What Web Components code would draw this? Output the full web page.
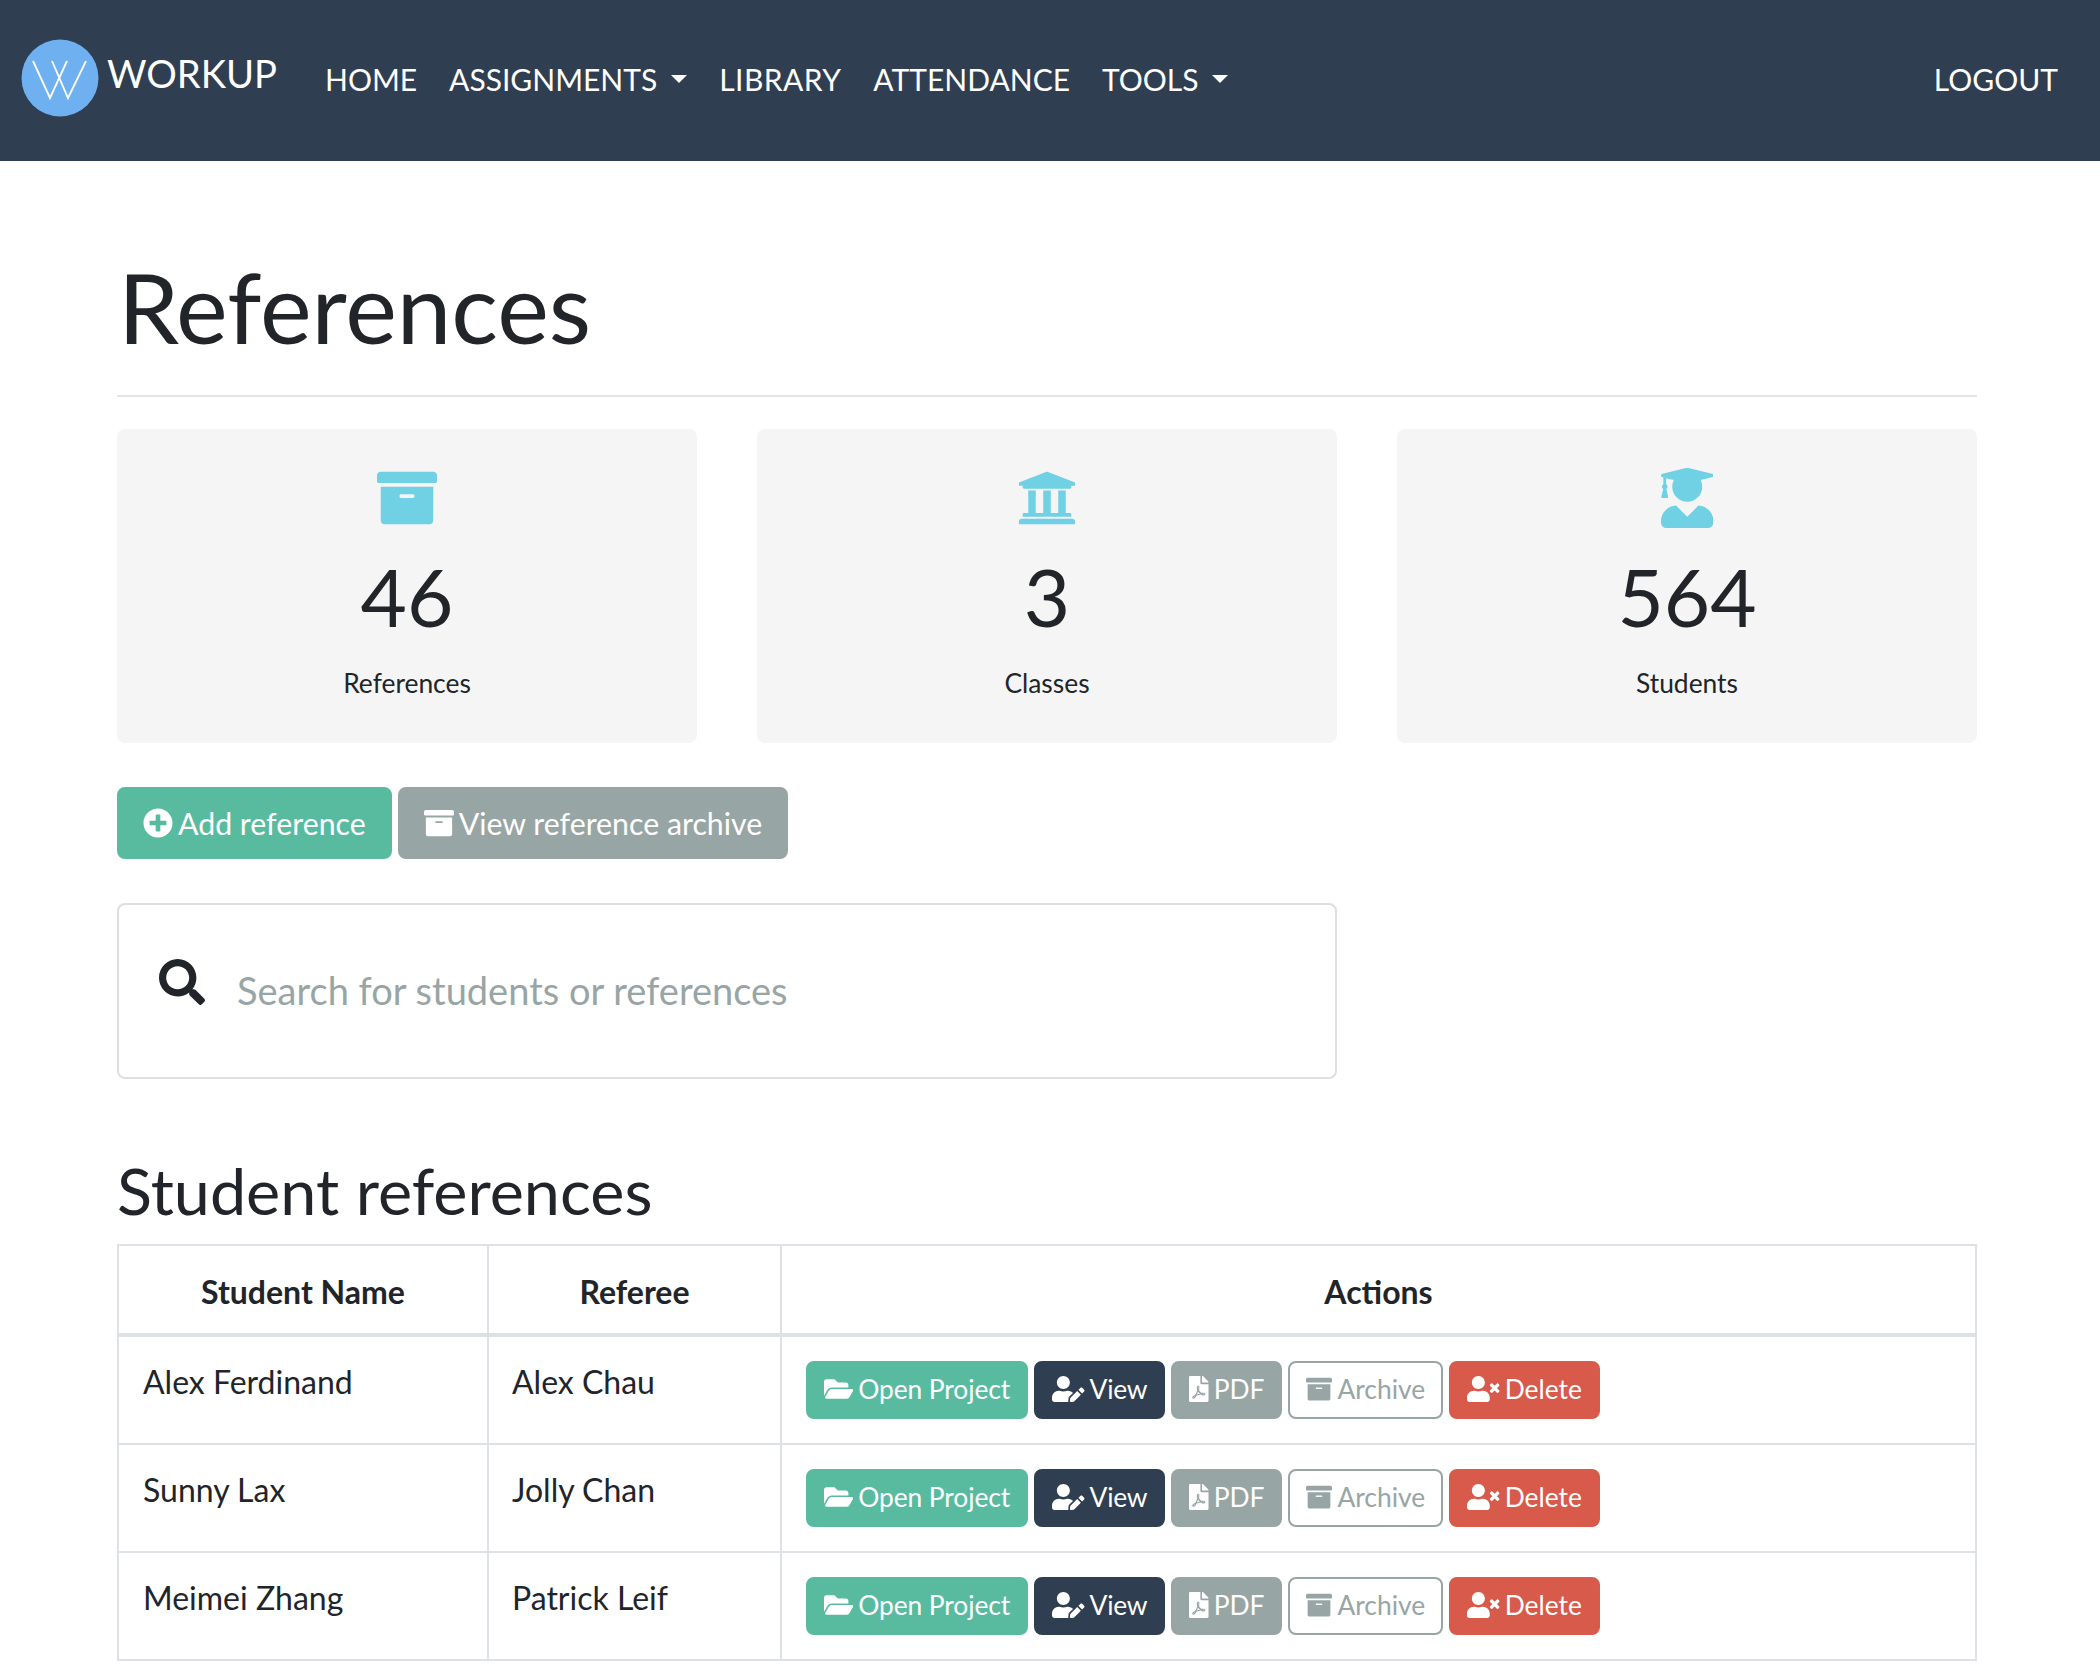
<!DOCTYPE html>
<html lang="en">
<head>
<meta charset="utf-8">
<title>References</title>
<style>
  html, body { margin: 0; background: #fff; }
  body { font-family: Lato, "Liberation Sans", sans-serif; color: #212529; }
</style>
</head>
<body>
<app-nav>
  <nav-link href="#">HOME</nav-link>
  <nav-link href="#" caret>ASSIGNMENTS</nav-link>
  <nav-link href="#" style="letter-spacing:.45px">LIBRARY</nav-link>
  <nav-link href="#">ATTENDANCE</nav-link>
  <nav-link href="#" caret>TOOLS</nav-link>
  <nav-link href="#" slot="right">LOGOUT</nav-link>
</app-nav>
<page-main>
  <page-title>References</page-title>
  <stat-row>
    <stat-card icon="archive" value="46">References</stat-card>
    <stat-card icon="university" value="3">Classes</stat-card>
    <stat-card icon="graduate" value="564">Students</stat-card>
  </stat-row>
  <button-row>
    <action-btn big variant="teal" icon="plus">Add reference</action-btn>
    <action-btn big variant="gray" icon="archive">View reference archive</action-btn>
  </button-row>
  <search-box placeholder="Search for students or references"></search-box>
  <section-title>Student references</section-title>
  <ref-table>
    <ref-row student="Alex Ferdinand" referee="Alex Chau"></ref-row>
    <ref-row student="Sunny Lax" referee="Jolly Chan"></ref-row>
    <ref-row student="Meimei Zhang" referee="Patrick Leif"></ref-row>
  </ref-table>
</page-main>

<script>
const ICONS = {
  archive: [512, 'M32 448c0 17.7 14.3 32 32 32h384c17.7 0 32-14.3 32-32V160H32v288zm160-212c0-6.6 5.4-12 12-12h104c6.6 0 12 5.4 12 12v8c0 6.6-5.4 12-12 12H204c-6.6 0-12-5.4-12-12v-8zM480 32H32C14.3 32 0 46.3 0 64v48c0 8.8 7.2 16 16 16h480c8.8 0 16-7.2 16-16V64c0-17.7-14.3-32-32-32z'],
  university: [512, 'M496 128v16a8 8 0 0 1-8 8h-24v12c0 6.627-5.373 12-12 12H60c-6.627 0-12-5.373-12-12v-12H24a8 8 0 0 1-8-8v-16a8 8 0 0 1 4.941-7.392l232-88a7.996 7.996 0 0 1 6.118 0l232 88A8 8 0 0 1 496 128zm-24 304H40c-13.255 0-24 10.745-24 24v16a8 8 0 0 0 8 8h464a8 8 0 0 0 8-8v-16c0-13.255-10.745-24-24-24zM96 192v192H60c-6.627 0-12 5.373-12 12v20h416v-20c0-6.627-5.373-12-12-12h-36V192h-64v192h-64V192h-64v192h-64V192H96z'],
  graduate: [448, 'M319.4 320.6L224 416l-95.4-95.4C57.1 323.7 0 382.2 0 454.4v9.6c0 26.5 21.5 48 48 48h352c26.5 0 48-21.5 48-48v-9.6c0-72.2-57.1-130.7-128.6-133.8zM13.6 79.8l6.4 1.5v58.4c-7 4.2-12 11.5-12 20.3 0 8.4 4.6 15.4 11.1 19.7L3.5 242c-1.7 6.9 2.1 14 7.6 14h41.8c5.5 0 9.3-7.1 7.6-14l-15.6-62.3C51.4 175.4 56 168.4 56 160c0-8.8-5-16.1-12-20.3V87.1l66 15.9c-8.6 17.2-14 36.4-14 57 0 70.7 57.3 128 128 128s128-57.3 128-128c0-20.6-5.3-39.8-14-57l96.3-23.2c18.2-4.4 18.2-27.1 0-31.5l-190.4-46c-13-3.1-26.7-3.1-39.7 0L13.6 48.2c-18.1 4.4-18.1 27.2 0 31.6z'],
  plus: [512, 'M256 8C119 8 8 119 8 256s111 248 248 248 248-111 248-248S393 8 256 8zm144 276c0 6.6-5.4 12-12 12h-92v92c0 6.6-5.4 12-12 12h-56c-6.6 0-12-5.4-12-12v-92h-92c-6.6 0-12-5.4-12-12v-56c0-6.6 5.4-12 12-12h92v-92c0-6.6 5.4-12 12-12h56c6.6 0 12 5.4 12 12v92h92c6.6 0 12 5.4 12 12v56z'],
  search: [512, 'M505 442.7L405.3 343c-4.5-4.5-10.6-7-17-7H372c27.6-35.3 44-79.7 44-128C416 93.1 322.9 0 208 0S0 93.1 0 208s93.1 208 208 208c48.3 0 92.7-16.4 128-44v16.3c0 6.4 2.5 12.5 7 17l99.7 99.7c9.4 9.4 24.6 9.4 33.9 0l28.3-28.3c9.4-9.4 9.4-24.6.1-34zM208 336c-70.7 0-128-57.2-128-128 0-70.7 57.2-128 128-128 70.7 0 128 57.2 128 128 0 70.7-57.2 128-128 128z'],
  folder: [576, 'M572.694 292.093L500.27 416.248A63.997 63.997 0 0 1 444.989 448H45.025c-18.523 0-30.064-20.093-20.731-36.093l72.424-124.155A64 64 0 0 1 152 256h399.964c18.523 0 30.064 20.093 20.73 36.093zM152 224h328v-48c0-26.51-21.49-48-48-48H272l-64-64H48C21.49 64 0 85.49 0 112v278.046l69.077-118.418C86.214 242.25 117.989 224 152 224z'],
  useredit: [640, 'M224 256c70.7 0 128-57.3 128-128S294.7 0 224 0 96 57.3 96 128s57.3 128 128 128zm89.6 32h-16.7c-22.2 10.2-46.9 16-72.9 16s-50.6-5.8-72.9-16h-16.7C60.2 288 0 348.2 0 422.4V464c0 26.5 21.5 48 48 48h274.9c-2.4-6.8-3.4-14-2.6-21.3l6.8-60.9 1.2-11.1 7.9-7.9 77.3-77.3c-24.5-27.7-60-45.5-99.9-45.5zm45.3 145.3l-6.8 61c-1.1 10.2 7.5 18.8 17.6 17.6l60.9-6.8 137.9-137.9-71.7-71.7-137.9 137.8zM633 268.9L595.1 231c-9.3-9.3-24.5-9.3-33.8 0l-37.8 37.8-4.1 4.1 71.8 71.7 41.8-41.8c9.3-9.4 9.3-24.5 0-33.9z'],
  usertimes: [640, 'M589.6 240l45.6-45.6c6.3-6.3 6.3-16.5 0-22.8l-22.8-22.8c-6.3-6.3-16.5-6.3-22.8 0L544 194.4l-45.6-45.6c-6.3-6.3-16.5-6.3-22.8 0l-22.8 22.8c-6.3 6.3-6.3 16.5 0 22.8l45.6 45.6-45.6 45.6c-6.3 6.3-6.3 16.5 0 22.8l22.8 22.8c6.3 6.3 16.5 6.3 22.8 0l45.6-45.6 45.6 45.6c6.3 6.3 16.5 6.3 22.8 0l22.8-22.8c6.3-6.3 6.3-16.5 0-22.8L589.6 240zM224 256c70.7 0 128-57.3 128-128S294.7 0 224 0 96 57.3 96 128s57.3 128 128 128zm89.6 32h-16.7c-22.2 10.2-46.9 16-72.9 16s-50.6-5.8-72.9-16h-16.7C60.2 288 0 348.2 0 422.4V464c0 26.5 21.5 48 48 48h352c26.5 0 48-21.5 48-48v-41.6c0-74.2-60.2-134.4-134.4-134.4z'],
  pdf: [384, 'M181.9 256.1c-5-16-4.9-46.9-2-46.9 8.4 0 7.6 36.9 2 46.9zm-1.7 47.2c-7.7 20.2-17.3 43.3-28.4 62.7 18.3-7 39-17.2 62.9-21.9-12.7-9.6-24.9-23.4-34.5-40.8zM86.1 428.1c0 .8 13.2-5.4 34.9-40.2-6.7 6.3-29.1 24.5-34.9 40.2zM248 160h136v328c0 13.3-10.7 24-24 24H24c-13.3 0-24-10.7-24-24V24C0 10.7 10.7 0 24 0h200v136c0 13.2 10.8 24 24 24zm-8 171.8c-20-12.2-33.3-29-42.7-53.8 4.5-18.5 11.6-46.6 6.2-64.2-4.7-29.4-42.4-26.5-47.8-6.8-5 18.3-.4 44.1 8.1 77-11.6 27.6-28.7 64.6-40.8 85.8-.1 0-.1.1-.2.1-27.1 13.9-73.6 44.5-54.5 68 5.6 6.9 16 10 21.5 10 17.9 0 35.7-18 61.1-61.8 25.8-8.5 54.1-19.1 79-23.2 21.7 11.8 47.1 19.5 64 19.5 29.2 0 31.2-32 19.7-43.4-13.9-13.6-54.3-9.7-73.6-7.2zM377 105L279 7c-4.5-4.5-10.6-7-17-7h-6v128h128v-6.1c0-6.3-2.5-12.4-7-16.9zm-74.1 255.3c4.1-2.7-2.5-11.9-42.8-9 37.1 15.8 42.8 9 42.8 9z']
};

// icons are square em boxes high, width follows the viewBox, like the icon font did
function icon(name, size) {
  const [w, d] = ICONS[name];
  return `<svg width="${size * w / 512}" height="${size}" viewBox="0 0 ${w} 512" fill="currentColor" aria-hidden="true"><path d="${d}"/></svg>`;
}

class AppNav extends HTMLElement {
  constructor() {
    super();
    this.attachShadow({ mode: 'open' });
    this.shadowRoot.innerHTML = `
      <style>
        :host { display: flex; align-items: center; height: 161px; background: #2f3e50; color: #fff; padding: 0 42px 0 21px; box-sizing: border-box; }
        .logo { width: 78px; height: 78px; margin: -5px 8px 0 0; flex: none; display: block; }
        .brand { font-size: 38.2px; line-height: 48px; margin: -15px 48px 0 0; color: #fff; }
        .links { display: flex; gap: 32px; align-items: center; flex: 1; }
      </style>
      <svg class="logo" viewBox="0 0 78 78" aria-hidden="true">
        <circle cx="39" cy="39" r="38.5" fill="#6fb0f0"/>
        <path d="M12 22 L29 59 L46 22 M31 22 L47 59 L65 22" fill="none" stroke="#fff" stroke-width="1.8"/>
      </svg>
      <span class="brand">WORKUP</span>
      <div class="links"><slot></slot></div>
      <slot name="right"></slot>
    `;
  }
}
customElements.define('app-nav', AppNav);

class NavLink extends HTMLElement {
  constructor() {
    super();
    this.attachShadow({ mode: 'open' });
    this.shadowRoot.innerHTML = `
      <style>
        :host { display: inline-flex; align-items: center; font-size: 30px; line-height: 38px; margin-top: -4px; color: #fff; }
        a { color: inherit; text-decoration: none; display: inline-flex; align-items: center; }
        .caret { width: 0; height: 0; margin-left: 14px; border-top: 8px solid #fff; border-left: 8px solid transparent; border-right: 8px solid transparent; }
      </style>
      <a href="${this.getAttribute('href') || '#'}"><slot></slot>${this.hasAttribute('caret') ? '<span class="caret"></span>' : ''}</a>
    `;
  }
}
customElements.define('nav-link', NavLink);

class PageMain extends HTMLElement {
  constructor() {
    super();
    this.attachShadow({ mode: 'open' });
    this.shadowRoot.innerHTML = `
      <style>
        :host { display: block; padding: 0 123px 0 117px; }
      </style>
      <slot></slot>
    `;
  }
}
customElements.define('page-main', PageMain);

class PageTitle extends HTMLElement {
  constructor() {
    super();
    this.attachShadow({ mode: 'open' });
    this.shadowRoot.innerHTML = `
      <style>
        :host { display: block; padding: 86px 0 30px 1px; border-bottom: 2px solid #e3e5e7; }
        h1 { margin: 0; font-size: 97.8px; line-height: 118px; font-weight: 400; color: #212529; }
      </style>
      <h1><slot></slot></h1>
    `;
  }
}
customElements.define('page-title', PageTitle);

class StatRow extends HTMLElement {
  constructor() {
    super();
    this.attachShadow({ mode: 'open' });
    this.shadowRoot.innerHTML = `
      <style>
        :host { display: grid; grid-template-columns: repeat(3, 580px); column-gap: 60px; margin-top: 32px; }
      </style>
      <slot></slot>
    `;
  }
}
customElements.define('stat-row', StatRow);

class StatCard extends HTMLElement {
  constructor() {
    super();
    this.attachShadow({ mode: 'open' });
    this.shadowRoot.innerHTML = `
      <style>
        :host { display: flex; flex-direction: column; align-items: center; height: 314px; box-sizing: border-box; padding-top: 39px; background: #f5f5f5; border-radius: 8px; color: #212529; }
        .ico { color: #70d0e4; height: 60px; }
        .ico svg { display: block; }
        .num { font-size: 80px; line-height: 100px; margin-top: 18px; }
        .lbl { font-size: 26.4px; line-height: 32px; margin-top: 21px; }
      </style>
      <div class="ico">${icon(this.getAttribute('icon'), 60)}</div>
      <div class="num">${this.getAttribute('value')}</div>
      <div class="lbl"><slot></slot></div>
    `;
  }
}
customElements.define('stat-card', StatCard);

class ButtonRow extends HTMLElement {
  constructor() {
    super();
    this.attachShadow({ mode: 'open' });
    this.shadowRoot.innerHTML = `
      <style>
        :host { display: flex; gap: 6px; margin-top: 44px; }
      </style>
      <slot></slot>
    `;
  }
}
customElements.define('button-row', ButtonRow);

const BTN_COLORS = {
  teal: 'background:#58bb9f;border-color:#58bb9f;color:#fff',
  navy: 'background:#2f3e50;border-color:#2f3e50;color:#fff',
  gray: 'background:#98a5a5;border-color:#98a5a5;color:#fff',
  outline: 'background:#fff;border-color:#98a5a5;color:#98a5a5',
  red: 'background:#d75a4a;border-color:#d75a4a;color:#fff'
};

class ActionBtn extends HTMLElement {
  constructor() {
    super();
    this.attachShadow({ mode: 'open' });
    const big = this.hasAttribute('big');
    this.shadowRoot.innerHTML = `
      <style>
        :host { display: inline-block; flex: none; }
        button {
          display: inline-flex; align-items: center; box-sizing: border-box; font-family: inherit; cursor: pointer;
          border: 2px solid; border-radius: 8px; white-space: nowrap; letter-spacing: inherit;
          height: ${big ? 72 : 58}px; padding: 0 ${big ? '24px' : '16px 3px'}; gap: 5px;
          font-size: ${big ? 30.3 : 26.4}px; ${BTN_COLORS[this.getAttribute('variant')]};
        }
        svg { display: block; flex: none; }
      </style>
      <button type="button">${icon(this.getAttribute('icon'), big ? 30 : 26)}<slot></slot></button>
    `;
  }
}
customElements.define('action-btn', ActionBtn);

class SearchBox extends HTMLElement {
  constructor() {
    super();
    this.attachShadow({ mode: 'open' });
    this.shadowRoot.innerHTML = `
      <style>
        :host { display: flex; align-items: center; width: 1220px; height: 176px; box-sizing: border-box; margin-top: 44px; padding: 0 40px; border: 2px solid #dedfe0; border-radius: 8px; }
        .ico { color: #212529; margin: -18px 32px 0 0; }
        .ico svg { display: block; }
        input { flex: 1; border: 0; outline: 0; padding: 0 0 2px; background: none; font-family: inherit; font-size: 38px; color: #212529; }
        input::placeholder { color: #98a5a5; opacity: 1; }
      </style>
      <div class="ico">${icon('search', 46)}</div>
      <input type="text" placeholder="${this.getAttribute('placeholder')}">
    `;
  }
}
customElements.define('search-box', SearchBox);

class SectionTitle extends HTMLElement {
  constructor() {
    super();
    this.attachShadow({ mode: 'open' });
    this.shadowRoot.innerHTML = `
      <style>
        :host { display: block; margin-top: 73px; }
        h2 { margin: 0; font-size: 64.7px; line-height: 77px; font-weight: 400; color: #212529; padding-bottom: 15px; }
      </style>
      <h2><slot></slot></h2>
    `;
  }
}
customElements.define('section-title', SectionTitle);

const TABLE_COLS = '368px 293px 1fr';

class RefTable extends HTMLElement {
  constructor() {
    super();
    this.attachShadow({ mode: 'open' });
    this.shadowRoot.innerHTML = `
      <style>
        :host { display: block; border: 2px solid #dee2e6; border-bottom-width: 0; }
        .head { display: grid; grid-template-columns: ${TABLE_COLS}; height: 87px; border-bottom: 4px solid #dee2e6; }
        .head div { display: flex; align-items: center; justify-content: center; padding-top: 3px; font-size: 32px; font-weight: 700; color: #212529; border-left: 2px solid #dee2e6; }
        .head div:first-child { border-left: 0; }
      </style>
      <div class="head"><div>Student Name</div><div>Referee</div><div>Actions</div></div>
      <slot></slot>
    `;
  }
}
customElements.define('ref-table', RefTable);

class RefRow extends HTMLElement {
  constructor() {
    super();
    this.attachShadow({ mode: 'open' });
    this.shadowRoot.innerHTML = `
      <style>
        :host { display: grid; grid-template-columns: ${TABLE_COLS}; height: 106px; border-bottom: 2px solid #dee2e6; }
        .cell { font-size: 32px; line-height: 40px; padding: 25px 0 0 23px; color: #212529; border-left: 2px solid #dee2e6; }
        .cell.first { border-left: 0; padding-left: 24px; }
        .acts { display: flex; gap: 6px; align-items: flex-start; padding: 24px 0 0 24px; border-left: 2px solid #dee2e6; }
      </style>
      <div class="cell first">${this.getAttribute('student')}</div>
      <div class="cell">${this.getAttribute('referee')}</div>
      <div class="acts">
        <action-btn variant="teal" icon="folder" style="letter-spacing:-.1px">Open Project</action-btn>
        <action-btn variant="navy" icon="useredit" style="letter-spacing:-.3px">View</action-btn>
        <action-btn variant="gray" icon="pdf">PDF</action-btn>
        <action-btn variant="outline" icon="archive">Archive</action-btn>
        <action-btn variant="red" icon="usertimes">Delete</action-btn>
      </div>
    `;
  }
}
customElements.define('ref-row', RefRow);
</script>
</body>
</html>
